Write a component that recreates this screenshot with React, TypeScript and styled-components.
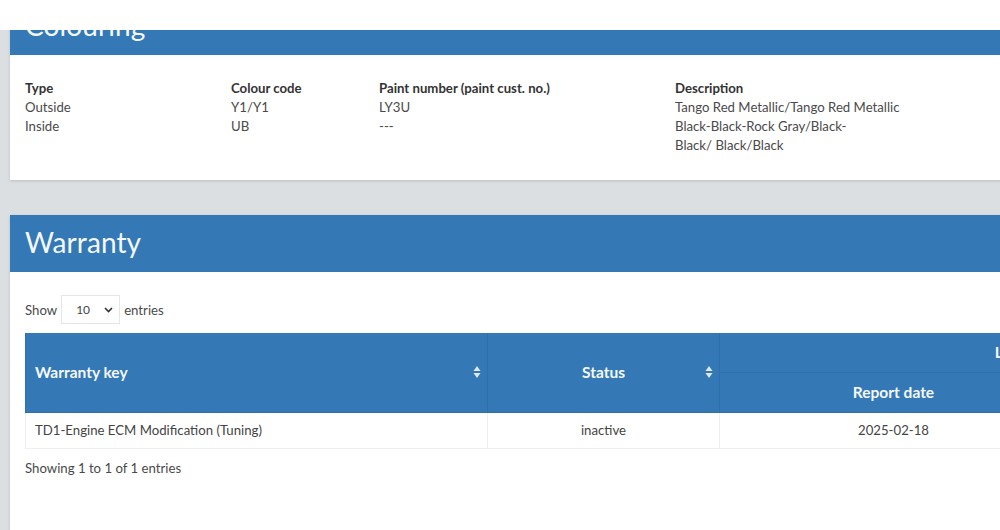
import React from "react";
import styled, { createGlobalStyle } from "styled-components";

const GlobalStyle = createGlobalStyle`
  html, body {
    margin: 0;
    padding: 0;
    background: #dcdfe2;
    overflow: hidden;
    font-family: Lato, "Noto Sans", sans-serif;
  }
`;

const TopBar = styled.div`
  position: fixed;
  top: 0;
  left: 0;
  right: 0;
  height: 30px;
  background: #ffffff;
  z-index: 10;
`;

const Page = styled.div`
  width: 1400px;
  padding: 0 0 0 10px;
  margin-top: -2px;
  display: flex;
  flex-direction: column;
  gap: 35px;
`;

const Card = styled.section`
  background: #ffffff;
  box-shadow: 0 1px 3px rgba(0, 0, 0, 0.14);
`;

const CardHeader = styled.header`
  height: 57px;
  background: #3479b5;
  display: flex;
  align-items: flex-end;
  padding: 0 15px 12px;
  box-sizing: border-box;
`;

const CardTitle = styled.h2`
  margin: 0;
  color: #f4f8fc;
  font-family: Lato, sans-serif;
  font-weight: 400;
  font-size: 28px;
  line-height: 36px;
  letter-spacing: 0.1px;
`;

const ColourBody = styled.div`
  padding: 24px 15px 25px;
  display: grid;
  grid-template-columns: 206px 148px 296px 1fr;
  font-size: 13.2px;
  line-height: 19px;
  color: #4a4a4a;
`;

const Column = styled.div`
  display: flex;
  flex-direction: column;
`;

const ColHead = styled.div`
  font-weight: 700;
  color: #333333;
`;

const ColValue = styled.div<{ $narrow?: boolean }>`
  max-width: ${(p) => (p.$narrow ? "185px" : "none")};
`;

const WarrantyBody = styled.div`
  padding: 23px 15px 60px;
  font-size: 13.2px;
  color: #4a4a4a;
`;

const LengthRow = styled.div`
  display: flex;
  align-items: center;
  gap: 4px;
  height: 29px;
`;

const SelectBox = styled.div`
  width: 59px;
  height: 29px;
  box-sizing: border-box;
  border: 1px solid #e4e6e8;
  display: flex;
  align-items: center;
  justify-content: space-between;
  padding: 0 6px 0 14px;
  font-size: 12px;
  color: #444;
`;

const Table = styled.table`
  margin-top: 9px;
  border-collapse: collapse;
  table-layout: fixed;
  width: 1320px;
  font-size: 13.2px;
`;

const Th = styled.th<{ $align?: string; $h?: number }>`
  background: #3479b5;
  color: #f4f8fc;
  font-weight: 700;
  font-size: 15.5px;
  text-align: ${(p) => p.$align || "center"};
  height: ${(p) => p.$h || 39}px;
  padding: 0 9px;
  border: 1px solid #3070aa;
  border-top: none;
  position: relative;
  box-sizing: border-box;
`;

const SortIcon = styled.svg`
  position: absolute;
  right: 6px;
  top: 50%;
  transform: translateY(-50%);
`;

const Td = styled.td<{ $align?: string }>`
  height: 36px;
  padding: 0 9px;
  color: #444;
  text-align: ${(p) => p.$align || "center"};
  border: 1px solid #eceeef;
  border-top: none;
  box-sizing: border-box;
`;

const Info = styled.div`
  margin-top: 10px;
  line-height: 19px;
`;

const Sort = () => (
  <SortIcon width="8" height="14" viewBox="0 0 8 14">
    <path d="M4 1 L7.5 6 L0.5 6 Z" fill="#dfe9f3" />
    <path d="M4 13 L7.5 8 L0.5 8 Z" fill="#dfe9f3" />
  </SortIcon>
);

export default function App() {
  return (
    <>
      <GlobalStyle />
      <TopBar />
      <Page>
        <Card>
          <CardHeader>
            <CardTitle>Colouring</CardTitle>
          </CardHeader>
          <ColourBody>
            <Column>
              <ColHead>Type</ColHead>
              <ColValue>Outside</ColValue>
              <ColValue>Inside</ColValue>
            </Column>
            <Column>
              <ColHead>Colour code</ColHead>
              <ColValue>Y1/Y1</ColValue>
              <ColValue>UB</ColValue>
            </Column>
            <Column>
              <ColHead>Paint number (paint cust. no.)</ColHead>
              <ColValue>LY3U</ColValue>
              <ColValue>---</ColValue>
            </Column>
            <Column>
              <ColHead>Description</ColHead>
              <ColValue>Tango Red Metallic/Tango Red Metallic</ColValue>
              <ColValue $narrow>Black-Black-Rock Gray/Black-Black/ Black/Black</ColValue>
            </Column>
          </ColourBody>
        </Card>
        <Card>
          <CardHeader>
            <CardTitle>Warranty</CardTitle>
          </CardHeader>
          <WarrantyBody>
            <LengthRow>
              <span>Show</span>
              <SelectBox>
                <span>10</span>
                <svg width="9" height="6" viewBox="0 0 9 6">
                  <path d="M1 1 L4.5 4.5 L8 1" stroke="#333" strokeWidth="1.6" fill="none" />
                </svg>
              </SelectBox>
              <span>entries</span>
            </LengthRow>
            <Table>
              <colgroup>
                <col style={{ width: 462 }} />
                <col style={{ width: 232 }} />
                <col style={{ width: 348 }} />
                <col style={{ width: 278 }} />
              </colgroup>
              <thead>
                <tr>
                  <Th rowSpan={2} $align="left">
                    Warranty key
                    <Sort />
                  </Th>
                  <Th rowSpan={2}>
                    Status
                    <Sort />
                  </Th>
                  <Th colSpan={2}>Last report</Th>
                </tr>
                <tr>
                  <Th $h={40}>Report date</Th>
                  <Th $h={40}>Mileage</Th>
                </tr>
              </thead>
              <tbody>
                <tr>
                  <Td $align="left">TD1-Engine ECM Modification (Tuning)</Td>
                  <Td>inactive</Td>
                  <Td>2025-02-18</Td>
                  <Td>—</Td>
                </tr>
              </tbody>
            </Table>
            <Info>Showing 1 to 1 of 1 entries</Info>
          </WarrantyBody>
        </Card>
      </Page>
    </>
  );
}
